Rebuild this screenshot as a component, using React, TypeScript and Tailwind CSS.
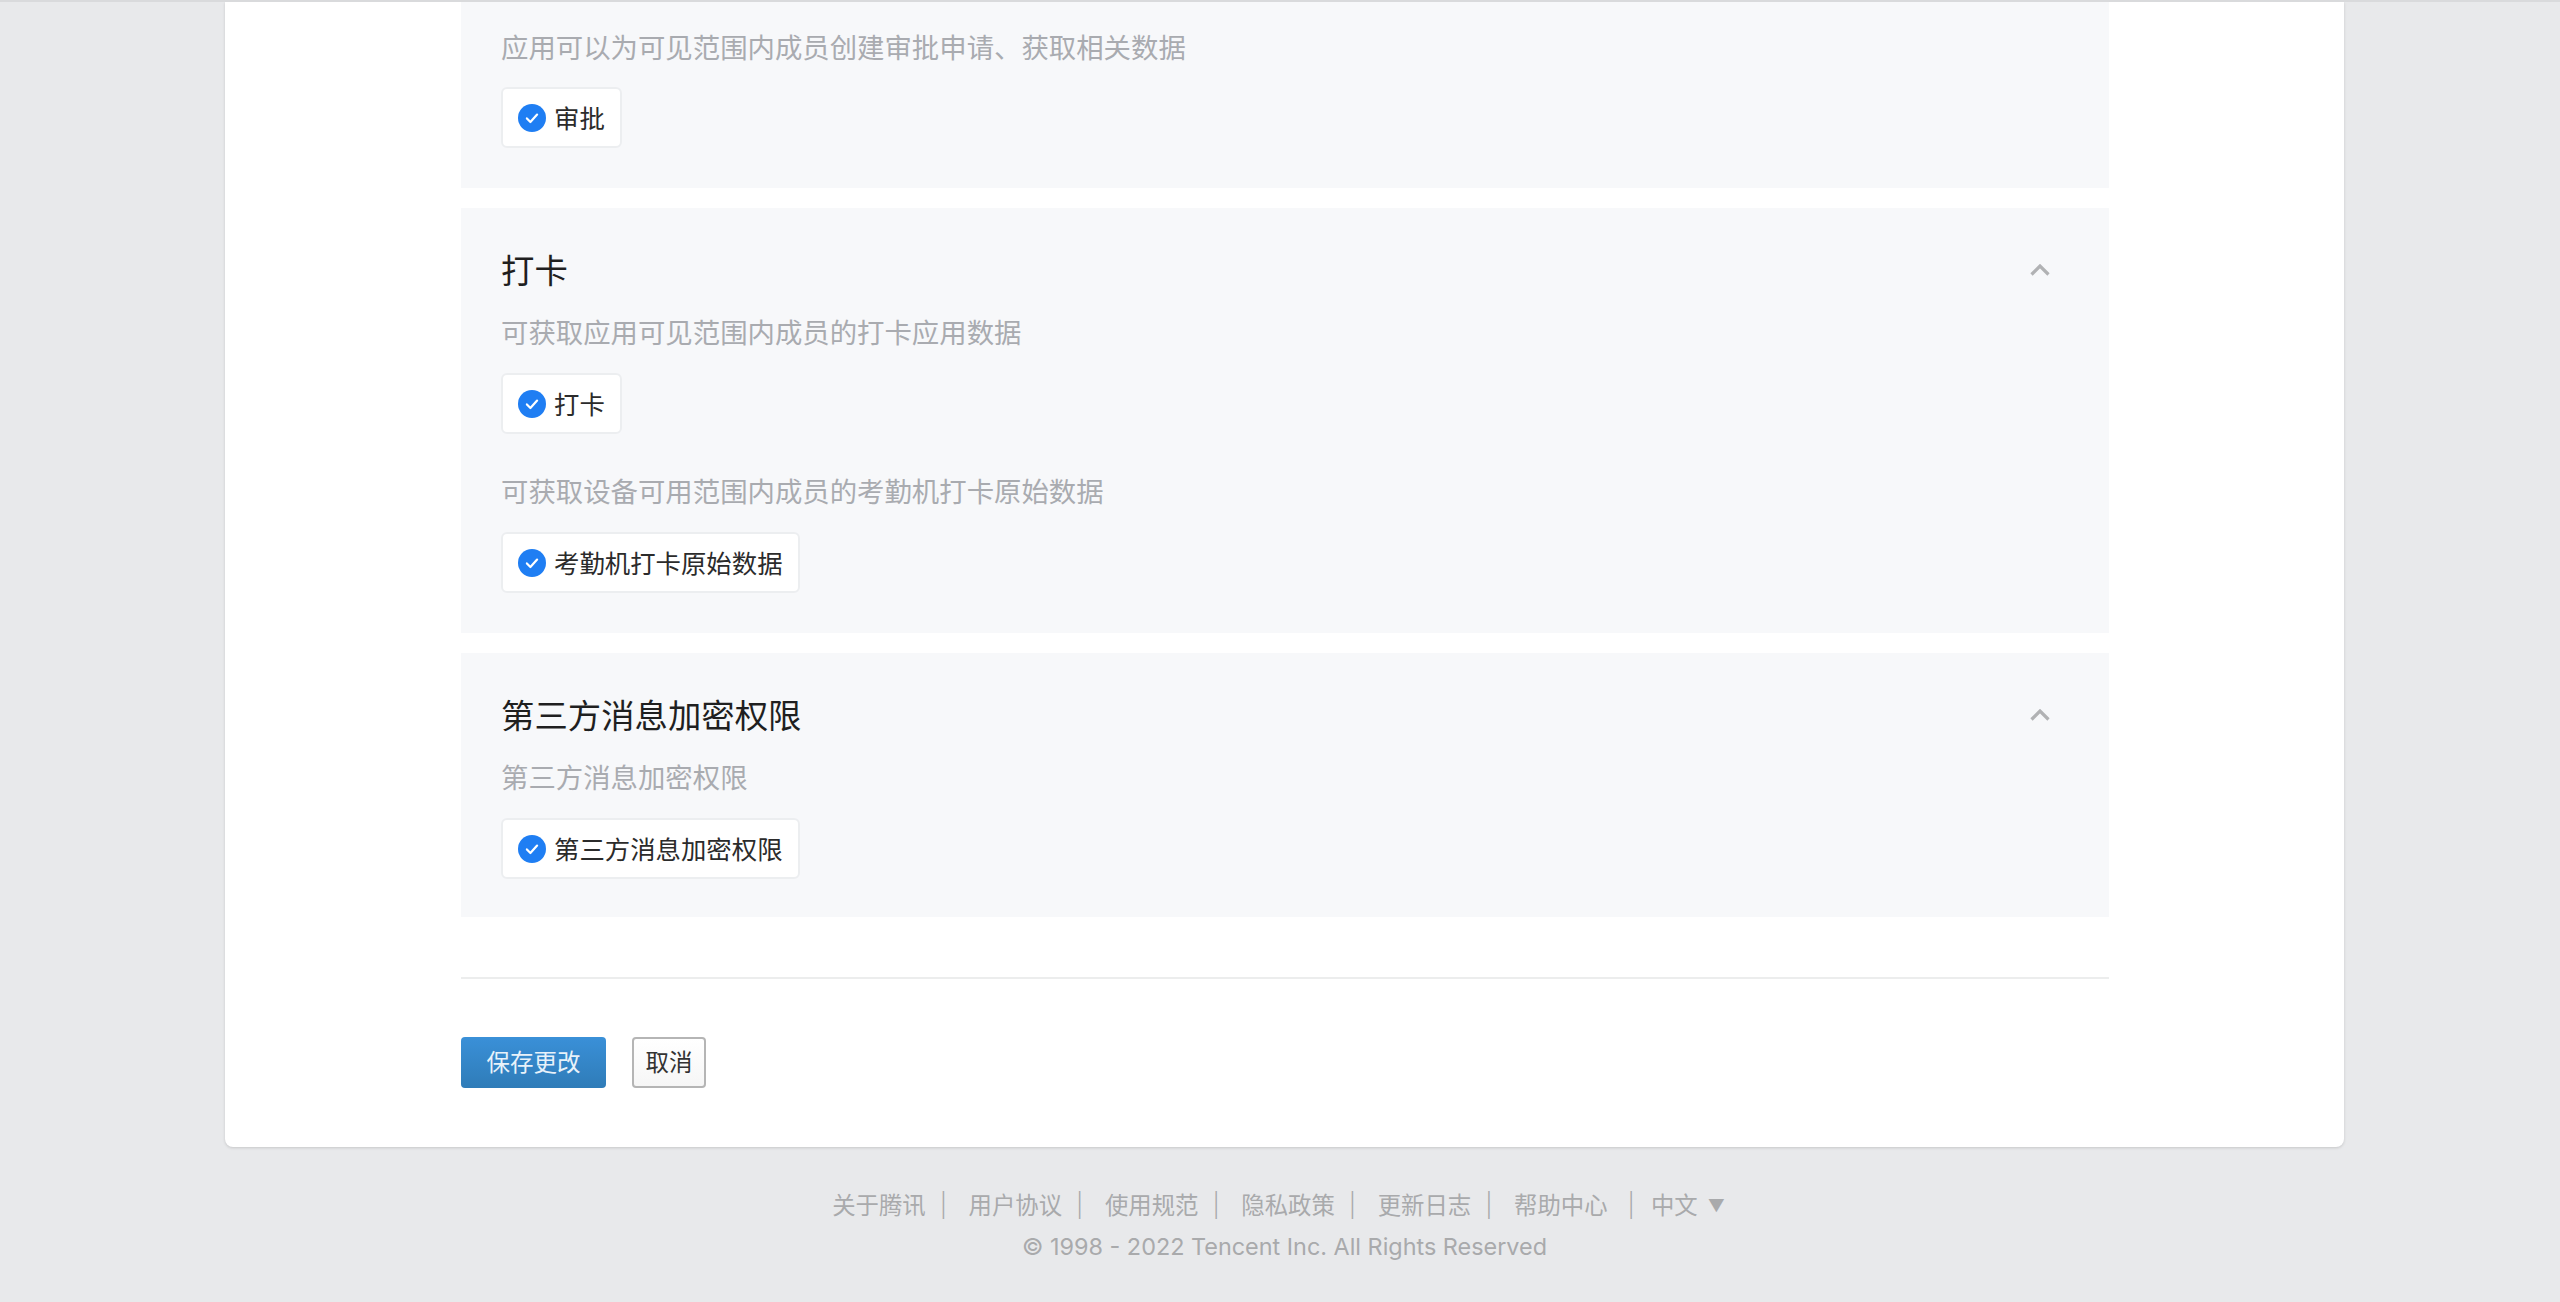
const cjk = "font-['Inter','Noto_Sans_CJK_SC',sans-serif]";

function CheckBadge() {
  return (
    <svg width="28" height="28" viewBox="0 0 28 28" className="shrink-0">
      <circle cx="14" cy="14" r="14" fill="#1f7ef3" />
      <path d="M8.9 14.4l3.5 3.6 6.7-7.4" fill="none" stroke="#fff" strokeWidth="2.2" strokeLinecap="round" strokeLinejoin="round" />
    </svg>
  );
}

function Chevron() {
  return (
    <svg width="20" height="12" viewBox="0 0 20 12" className="mr-[19px]">
      <path d="M1.5 10.5L10 2l8.5 8.5" fill="none" stroke="#b1b2b4" strokeWidth="3.2" />
    </svg>
  );
}

function Pill({ label }: { label: string }) {
  return (
    <div className="flex h-[61px] w-fit items-center gap-2 rounded-md border-2 border-[#eceef0] bg-white pl-[15px] pr-[15px] text-[25.4px] text-[#2b2b2b]">
      <CheckBadge />
      <span className="pt-[3px]">{label}</span>
    </div>
  );
}

function Desc({ children, className = "" }: { children: string; className?: string }) {
  return <p className={`h-10 text-[27.4px] leading-10 text-[#a9abb0] ${className}`}>{children}</p>;
}

function PanelTitle({ title }: { title: string }) {
  return (
    <div className="flex h-11 items-center justify-between">
      <h3 className="pt-[1px] text-[33.4px] leading-[44px] text-[#1f1f1f]">{title}</h3>
      <Chevron />
    </div>
  );
}

const links = ["关于腾讯", "用户协议", "使用规范", "隐私政策", "更新日志"];

export default function App() {
  return (
    <div className={`h-[1302px] overflow-hidden bg-[#e8e9eb] pt-0.5 ${cjk}`}>
      <div className="absolute left-0 right-0 top-0 h-0.5 bg-[#d9dadc]" />
      <main className="ml-[225px] w-[2119px] rounded-b-lg bg-white pb-[59px] pl-[236px] pr-[235px] shadow-[0_1px_3px_rgba(0,0,0,0.15)]">
        <div className="flex flex-col gap-[20px]">
          <section className="bg-[#f7f8fa] px-10 pb-10 pt-[26px]">
            <Desc>应用可以为可见范围内成员创建审批申请、获取相关数据</Desc>
            <div className="mt-[19px]">
              <Pill label="审批" />
            </div>
          </section>

          <section className="bg-[#f7f8fa] px-10 pb-10 pt-10">
            <PanelTitle title="打卡" />
            <Desc className="mt-[21px]">可获取应用可见范围内成员的打卡应用数据</Desc>
            <div className="mt-5">
              <Pill label="打卡" />
            </div>
            <Desc className="mt-[38px]">可获取设备可用范围内成员的考勤机打卡原始数据</Desc>
            <div className="mt-5">
              <Pill label="考勤机打卡原始数据" />
            </div>
          </section>

          <section className="bg-[#f7f8fa] px-10 pb-[38px] pt-10">
            <PanelTitle title="第三方消息加密权限" />
            <Desc className="mt-[21px]">第三方消息加密权限</Desc>
            <div className="mt-5">
              <Pill label="第三方消息加密权限" />
            </div>
          </section>
        </div>

        <div className="mt-[60px] border-t-2 border-[#eceded]" />

        <div className="mt-[58px] flex gap-[26px]">
          <button className="h-[51px] w-[145px] rounded-[4px] bg-gradient-to-b from-[#3a90d8] to-[#2f7cb8] text-[23.5px] text-[#e8f2fa]">
            保存更改
          </button>
          <button className="h-[51px] w-[74px] rounded-[4px] border-2 border-[#b5b5b5] bg-gradient-to-b from-white to-[#f6f6f6] text-[23.5px] text-[#333333]">
            取消
          </button>
        </div>
      </main>

      <footer className="ml-[225px] w-[2119px] pt-[39px] text-center text-[23.4px] text-[#a9aaac]">
        <div className="flex h-10 items-center justify-center pr-[12px] leading-10">
          {links.map((link) => (
            <span key={link} className="flex items-center">
              {link}
              <span className="ml-[14px] mr-[21.5px] font-light">|</span>
            </span>
          ))}
          <span>帮助中心</span>
          <span className="ml-[20px] mr-[16px] font-light">|</span>
          <span className="mr-[10px]">中文</span>
          <span className="text-[17px]">▼</span>
        </div>
        <p className="mt-[1px] h-10 leading-10">© 1998 - 2022 Tencent Inc. All Rights Reserved</p>
      </footer>
    </div>
  );
}
